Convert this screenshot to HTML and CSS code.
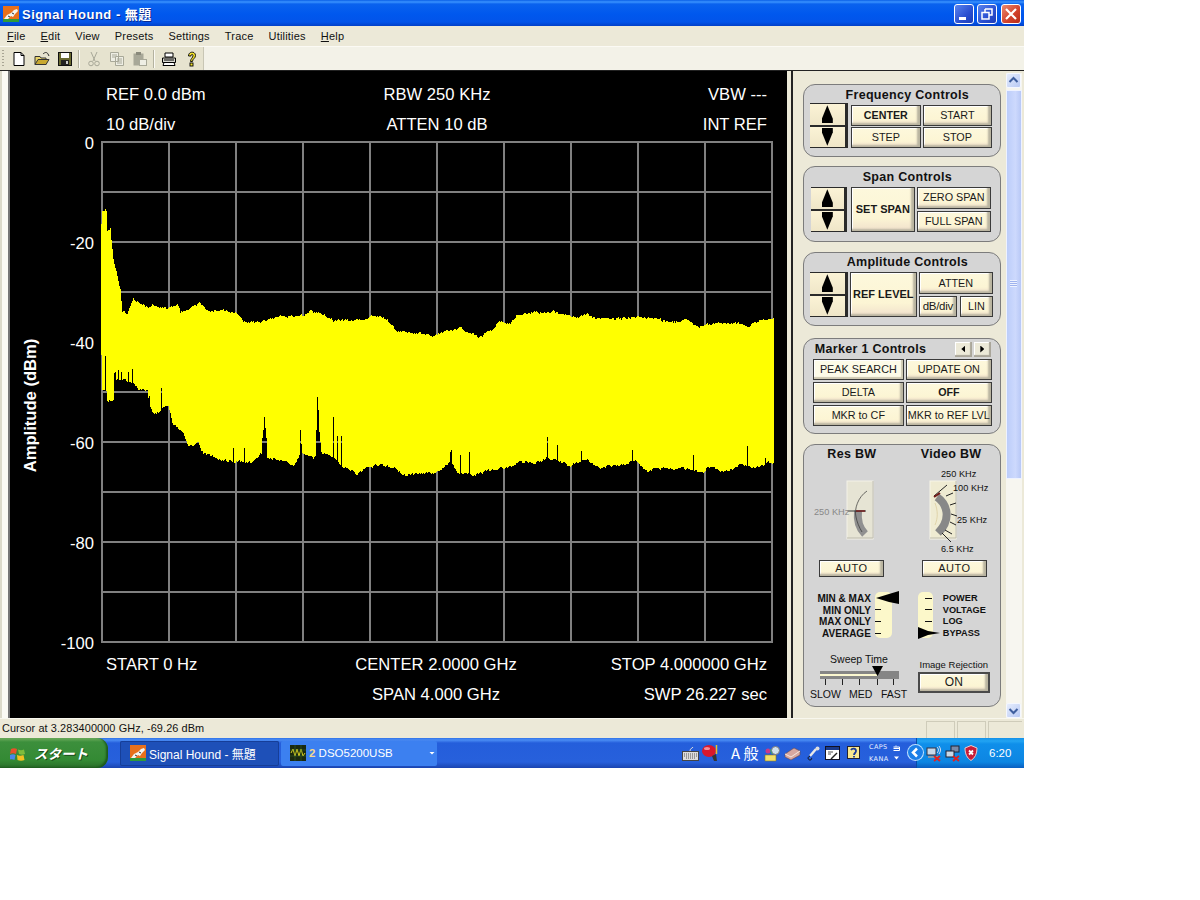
FILE: index.html
```html
<!DOCTYPE html>
<html lang="ja">
<head>
<meta charset="utf-8">
<title>Signal Hound - 無題</title>
<link rel="stylesheet" href="styles.css">
</head>
<body>
<svg class="defs" width="0" height="0">
  <symbol id="hound" viewBox="0 0 16 16">
    <rect width="16" height="16" fill="#e8701c"/>
    <rect y="13" width="16" height="3" fill="#2f9a3a"/>
    <path d="M1 13l3-4 4-2 3-3 3-1 1 2-3 3-2 3-2-1-3 3z" fill="#f4f4f0"/>
    <path d="M5 10l2 1 M9 7l2 1" stroke="#333" fill="none"/>
  </symbol>
</svg>
<div class="app">
  <header class="titlebar">
    <svg class="title-icon" width="16" height="16"><use href="#hound"/></svg>
    <span class="title-text">Signal Hound - 無題</span>
    <div class="win-btns">
      <span class="win-btn"><svg width="20" height="20" viewBox="0 0 20 20"><rect x="5" y="13" width="7" height="3" fill="#fff"/></svg></span>
      <span class="win-btn"><svg width="20" height="20" viewBox="0 0 20 20"><path d="M8 5h7v6h-3M8 5v3M5 8.500h7v6.500H5z" fill="none" stroke="#fff" stroke-width="1.500"/></svg></span>
      <span class="win-btn win-close"><svg width="20" height="20" viewBox="0 0 20 20"><path d="M5 5l10 10M15 5L5 15" stroke="#fff" stroke-width="2.200"/></svg></span>
    </div>
  </header>
  <nav class="menubar">
    <span><u>F</u>ile</span><span><u>E</u>dit</span><span>View</span><span>Presets</span><span>Settings</span><span>Trace</span><span>Utilities</span><span><u>H</u>elp</span>
  </nav>
  <div class="toolbar">
    <div class="tools">
      <i class="gripper"></i>
      <span class="tool"><svg width="16" height="16" viewBox="0 0 16 16"><path d="M3 1.500h7l3 3v10H3z" fill="#fff" stroke="#000"/><path d="M10 1.500v3h3" fill="none" stroke="#000"/></svg></span>
      <span class="tool"><svg width="16" height="16" viewBox="0 0 16 16"><path d="M1 5.500h5l1 1.500h5v6.500H1z" fill="#e8d46a" stroke="#333"/><path d="M1 13.500l3-5h11l-3 5z" fill="#c8a830" stroke="#333"/><path d="M9 3c2-2 4-2 5 0l1 2" stroke="#2a2a2a" fill="none"/></svg></span>
      <span class="tool"><svg width="16" height="16" viewBox="0 0 16 16"><rect x="1.500" y="1.500" width="13" height="13" fill="#6a6a30" stroke="#111"/><rect x="4" y="2" width="8" height="5" fill="#fff"/><rect x="4" y="9" width="8" height="5" fill="#222"/><rect x="9" y="10" width="2" height="3" fill="#ccc"/></svg></span>
      <i class="tool-sep"></i>
      <span class="tool"><svg width="16" height="16" viewBox="0 0 16 16"><path d="M5 1l4 9M11 1L7 10" stroke="#a8a898" fill="none"/><circle cx="5" cy="12.500" r="2.300" fill="none" stroke="#a8a898"/><circle cx="11" cy="12.500" r="2.300" fill="none" stroke="#a8a898"/></svg></span>
      <span class="tool"><svg width="16" height="16" viewBox="0 0 16 16"><path d="M1.500 1.500h8v9h-8zM6.500 5.500h8v9h-8z" fill="#eeeee4" stroke="#a8a898"/><path d="M3 4h5M3 6h3M8 8h5M8 10h5M8 12h5" stroke="#a8a898"/></svg></span>
      <span class="tool"><svg width="16" height="16" viewBox="0 0 16 16"><rect x="1.500" y="2.500" width="10" height="12" fill="#a8a898"/><rect x="4" y="1" width="5" height="3" fill="#8a8a7c"/><rect x="7.500" y="8.500" width="7" height="6" fill="#eeeee4" stroke="#a8a898"/></svg></span>
      <i class="tool-sep"></i>
      <span class="tool"><svg width="16" height="16" viewBox="0 0 16 16"><path d="M4 2h8v4H4z" fill="#fff" stroke="#000"/><path d="M1.500 7h13v4.500h-13z" fill="#d8d8d0" stroke="#000"/><path d="M3 11.500h10l1 3H2z" fill="#fff" stroke="#000"/><path d="M3 9h10" stroke="#000"/></svg></span>
      <span class="tool"><svg width="16" height="16" viewBox="0 0 16 16"><path d="M4.500 5c0-5 7-5 7-.500 0 3-3 3-3 6H6.500c0-3 2.500-3.500 2.500-6 0-1.500-2-1.500-2 .500z" fill="#f2e22c" stroke="#000" stroke-width=".9"/><rect x="6" y="12" width="3" height="3" fill="#f2e22c" stroke="#000" stroke-width=".9"/></svg></span>
    </div>
    <div class="toolbar-rest"></div>
  </div>
  <main class="workspace">
    <div class="plot-edge"></div>
    <svg class="plot" id="plot" viewBox="10 71 777 647" width="777" height="647">
      <g id="grid" class="grid"></g>
      <path id="trace" class="trace"/>
      <g class="plot-text">
        <text x="106" y="100">REF 0.0 dBm</text>
        <text x="106" y="130">10 dB/div</text>
        <text x="437" y="100" class="mid">RBW 250 KHz</text>
        <text x="437" y="130" class="mid">ATTEN 10 dB</text>
        <text x="767" y="100" class="end">VBW ---</text>
        <text x="767" y="130" class="end">INT REF</text>
        <text x="94" y="149" class="end">0</text>
        <text x="94" y="249" class="end">-20</text>
        <text x="94" y="349" class="end">-40</text>
        <text x="94" y="449" class="end">-60</text>
        <text x="94" y="549" class="end">-80</text>
        <text x="94" y="649" class="end">-100</text>
        <text x="106" y="670">START 0 Hz</text>
        <text x="436" y="670" class="mid">CENTER 2.0000 GHz</text>
        <text x="767" y="670" class="end">STOP 4.000000 GHz</text>
        <text x="436" y="700" class="mid">SPAN 4.000 GHz</text>
        <text x="767" y="700" class="end">SWP 26.227 sec</text>
        <text transform="translate(35.500 405.500) rotate(-90)" class="mid axis">Amplitude (dBm)</text>
      </g>
    </svg>
    <aside class="side">
      <div class="controls">
        <section class="group g-freq">
          <h3>Frequency Controls</h3>
          <div class="g-body">
            <div class="updown w38"><b class="ub"><i class="tri-up"></i></b><b class="ub"><i class="tri-down"></i></b></div>
            <div class="btn-grid freq-grid">
              <button class="btn strong">CENTER</button><button class="btn">START</button>
              <button class="btn">STEP</button><button class="btn">STOP</button>
            </div>
          </div>
        </section>
        <section class="group g-span">
          <h3>Span Controls</h3>
          <div class="g-body">
            <div class="updown w36"><b class="ub"><i class="tri-up"></i></b><b class="ub"><i class="tri-down"></i></b></div>
            <button class="btn big span-main">SET SPAN</button>
            <div class="stack span-stack"><button class="btn">ZERO SPAN</button><button class="btn">FULL SPAN</button></div>
          </div>
        </section>
        <section class="group g-amp">
          <h3>Amplitude Controls</h3>
          <div class="g-body">
            <div class="updown w38"><b class="ub"><i class="tri-up"></i></b><b class="ub"><i class="tri-down"></i></b></div>
            <button class="btn big amp-main">REF LEVEL</button>
            <div class="amp-grid">
              <button class="btn amp-wide">ATTEN</button>
              <button class="btn tight">dB/div</button><button class="btn">LIN</button>
            </div>
          </div>
        </section>
        <section class="group g-marker">
          <div class="marker-head">
            <h3>Marker 1 Controls</h3>
            <span class="nudge"><i class="nudge-l"></i></span><span class="nudge"><i class="nudge-r"></i></span>
          </div>
          <div class="btn-grid marker-grid">
            <button class="btn light">PEAK SEARCH</button><button class="btn">UPDATE ON</button>
            <button class="btn">DELTA</button><button class="btn strong">OFF</button>
            <button class="btn">MKR to CF</button><button class="btn">MKR to REF LVL</button>
          </div>
        </section>
        <section class="group g-bw">
          <div class="bw-head"><h3>Res BW</h3><h3>Video BW</h3></div>
          <div class="dials">
            <svg width="97" height="89" viewBox="803 465 97 89">
              <rect x="846" y="481" width="26" height="58" fill="#e6e4d4" stroke="#f4f2e8"/>
              <path d="M846 538h26v-57" fill="none" stroke="#bdbbae"/>
              <path d="M864 534c-6-6-8-14-7-23" fill="none" stroke="#909090" stroke-width="8"/>
              <path d="M866 491c-9 6-13 18-11 26 1 5 3 10 6 15" fill="none" stroke="#333" stroke-width=".7"/>
              <path d="M847 511h18" stroke="#333"/><path d="M855 511h9" stroke="#701818" stroke-width="1.500"/>
              <text x="813" y="514.500" class="dial-t off">250 KHz</text>
            </svg>
            <svg width="101" height="89" viewBox="900 465 101 89">
              <rect x="929" y="481" width="26" height="58" fill="#efebd2" stroke="#f8f6e8"/>
              <path d="M929 538h26v-57" fill="none" stroke="#bdbbae"/>
              <path d="M936 497c10 7 15 22 1 36" fill="none" stroke="#888" stroke-width="8"/>
              <path d="M933 496l13-11M945 496l7-3M949 505l6-2M950 514l6 2M949 522l6 3M944 530l7 4M941 533l9 9" stroke="#222" fill="none"/>
              <path d="M933 497l6-4" stroke="#701818" stroke-width="2"/>
              <path d="M934 503c3 8 3 15 0 22" fill="none" stroke="#d8c898" stroke-width=".7"/>
              <text x="940" y="477" class="dial-t">250 KHz</text>
              <text x="952" y="491" class="dial-t">100 KHz</text>
              <text x="956" y="523" class="dial-t">25 KHz</text>
              <text x="940" y="552" class="dial-t">6.5 KHz</text>
            </svg>
          </div>
          <div class="auto-row"><button class="btn auto">AUTO</button><button class="btn auto">AUTO</button></div>
          <div class="selectors">
            <div class="sel-left">
              <div class="sel-labels right"><span>MIN &amp; MAX</span><span>MIN ONLY</span><span>MAX ONLY</span><span>AVERAGE</span></div>
              <svg width="25" height="50" viewBox="875 590 25 50">
                <rect x="875" y="592" width="17" height="46" rx="5" fill="#fcf8ca"/>
                <path d="M875 609.500h6M875 621.500h6M875 633.500h6" stroke="#111"/>
                <path d="M876 598l13-4 10-3v13l-10-2z" fill="#000"/>
              </svg>
            </div>
            <div class="sel-right">
              <svg width="24" height="50" viewBox="917 590 24 50">
                <rect x="918" y="592" width="15" height="46" rx="5" fill="#fcf8ca"/>
                <path d="M925 598.500h7M925 609.500h7M925 621.500h7" stroke="#111"/>
                <path d="M918 627l10 4 12 2-12 2-10 4z" fill="#000"/>
              </svg>
              <div class="sel-labels narrow"><span>POWER</span><span>VOLTAGE</span><span>LOG</span><span>BYPASS</span></div>
            </div>
          </div>
          <div class="bottom-row">
            <svg class="sweep" width="100" height="50" viewBox="808 652 100 50">
              <text x="859" y="664" class="sweep-t mid">Sweep Time</text>
              <rect x="820" y="672" width="79" height="8" fill="#858585"/>
              <rect x="820" y="675" width="57" height="2" fill="#fbf7cf"/>
              <path d="M872 667h11l-5.500 10z" fill="#000"/>
              <path d="M825.500 680v6M842.500 680v6M859.500 680v6M877.500 680v6M893.500 680v6" stroke="#222"/>
              <text x="810" y="699" class="sweep-t">SLOW</text>
              <text x="849" y="699" class="sweep-t">MED</text>
              <text x="881" y="699" class="sweep-t">FAST</text>
            </svg>
            <div class="rejection">
              <span class="rej-label">Image Rejection</span>
              <button class="btn on">ON</button>
            </div>
          </div>
        </section>
      </div>
      <div class="scrollbar">
        <span class="sb-arrow"><svg width="15" height="15" viewBox="0 0 15 15"><path d="M3.500 9l4-4 4 4" fill="none" stroke="#3f5f9f" stroke-width="2"/></svg></span>
        <span class="sb-thumb"><i></i></span>
        <span class="sb-track"></span>
        <span class="sb-arrow"><svg width="15" height="15" viewBox="0 0 15 15"><path d="M3.500 6l4 4 4-4" fill="none" stroke="#3f5f9f" stroke-width="2"/></svg></span>
      </div>
    </aside>
  </main>
  <footer class="statusbar">
    <span class="status-text">Cursor at 3.283400000 GHz, -69.26 dBm</span>
    <span class="pane"></span><span class="pane"></span><span class="pane last"></span>
  </footer>
  <div class="taskbar">
    <div class="start">
      <svg width="17" height="17" viewBox="0 0 17 17"><path d="M1 4c2-1 4-1 6 0l-1 5c-2-1-4-1-6 0z" fill="#e8512a"/><path d="M8 4.500c2 1 4 1 6 0l1 4.500c-2 1-4 1-6 0z" fill="#7fbc3c"/><path d="M0 10c2-1 4-1 5.500 0l-1 5c-2-1-3.500-1-5.500 0z" fill="#4a86e8"/><path d="M7 10c2 1 4 1 6.500 0l1 5c-2 1-5 1-7 0z" fill="#f4c021"/></svg>
      <span class="start-t">スタート</span>
    </div>
    <div class="task active">
      <svg width="16" height="16"><use href="#hound"/></svg>
      <span>Signal Hound - 無題</span>
    </div>
    <div class="task group-task">
      <svg width="16" height="16" viewBox="0 0 16 16"><rect width="16" height="16" fill="#1a2a10"/><path d="M1 8l2-4 2 7 2-7 2 7 2-7 2 7 2-3" stroke="#d8d020" fill="none"/><path d="M0 5h16M0 11h16M5 0v16M11 0v16" stroke="#3a6a30" stroke-width=".5"/></svg>
      <span><b>2</b> DSO5200USB</span>
      <i class="caret"></i>
    </div>
    <div class="quick">
      <svg width="17" height="15" viewBox="0 0 17 15"><rect x=".5" y="5.500" width="16" height="9" fill="#ddd" stroke="#444"/><path d="M2 8h13M2 10h13M4 12h9" stroke="#555" stroke-dasharray="1 1"/><path d="M8 5c0-3 2-2 3-4" stroke="#ddd" fill="none"/></svg>
      <svg class="q-ball" width="17" height="17" viewBox="0 0 17 17"><ellipse cx="7" cy="7" rx="7" ry="6" fill="#d8182c"/><ellipse cx="5" cy="4.500" rx="3" ry="1.500" fill="#f48c98"/><path d="M10 12l2 5h3l-1-7z" fill="#333"/><path d="M14.500 1v9" stroke="#e8c030" stroke-width="1.500"/></svg>
      <span class="ime">A 般</span>
      <svg width="17" height="17" viewBox="0 0 17 17"><path d="M1 10h11v6H1z" fill="#f2e06a" stroke="#8a7a20" stroke-width=".6"/><circle cx="11.500" cy="5.500" r="4" fill="#cfe0ee" stroke="#777"/><circle cx="4" cy="6" r="2.500" fill="#c83a8a"/><path d="M6 4l2 5" stroke="#3a7"/></svg>
      <svg width="17" height="15" viewBox="0 0 17 15"><path d="M1 8l9-6 6 3v4l-9 5-6-3z" fill="#d9a8a0" stroke="#6a4a4a" stroke-width=".6"/><path d="M1 8l6 3 9-6" stroke="#f4e8e0" fill="none"/></svg>
      <svg class="q-mic" width="13" height="15" viewBox="0 0 13 15"><path d="M3 10L9 3" stroke="#e8e8e8" stroke-width="2.500"/><circle cx="10.500" cy="2.500" r="2" fill="#ddd"/><path d="M3 10c-3 1-2 4 0 4s2-2 1-2" fill="none" stroke="#111"/></svg>
      <svg class="q-win" width="15" height="15" viewBox="0 0 15 15"><rect x=".5" y=".5" width="14" height="13" fill="#fff" stroke="#112"/><rect x="1" y="1" width="13" height="3" fill="#1a3a8a"/><path d="M3 6h5M3 8h3" stroke="#555"/><path d="M6 13l6-6" stroke="#222" stroke-width="1.500"/></svg>
      <svg class="q-help" width="13" height="15" viewBox="0 0 13 15"><rect x=".5" y=".5" width="12" height="12" fill="#f8e890" stroke="#223"/><path d="M4 4c1-2 5-2 5 1 0 2-2 2-2 4M7 10v1.500" fill="none" stroke="#1a3a9a" stroke-width="1.800"/></svg>
      <div class="caps"><span>CAPS</span><span>KANA</span></div>
      <div class="caps-side"><svg width="7" height="17" viewBox="0 0 7 17"><path d="M3 .500v1M.5 2h6v3.500h-6M.5 3.500h6" fill="none" stroke="#fff"/><path d="M1 11.500h5l-2.500 3z" fill="#fff"/></svg></div>
    </div>
    <div class="tray">
      <span class="chev"><svg width="15" height="15" viewBox="0 0 15 15"><path d="M9 3.500L5 7.500l4 4" fill="none" stroke="#fff" stroke-width="2.500"/></svg></span>
      <svg class="t-net" width="16" height="17" viewBox="0 0 16 17"><rect x="1" y="3" width="9" height="7" fill="#c8d8e8" stroke="#334"/><rect x="2" y="11" width="10" height="2" fill="#8898a8"/><path d="M11 2c2 2 2 4 0 6M13 1c2 3 2 5 0 8" stroke="#dde" fill="none"/><path d="M8 11l6 5M14 11l-6 5" stroke="#e02020" stroke-width="1.800"/></svg>
      <svg class="t-net2" width="16" height="17" viewBox="0 0 16 17"><rect x="6" y="1" width="8" height="6" fill="#7a8aa8" stroke="#223"/><rect x="1" y="6" width="8" height="6" fill="#c8d8e8" stroke="#223"/><path d="M8 11l6 5M14 11l-6 5" stroke="#e02020" stroke-width="1.800"/></svg>
      <svg class="t-shield" width="14" height="16" viewBox="0 0 14 16"><path d="M7 .500l6 2.500c0 6-2 10-6 12.500C3 13 1 9 1 3z" fill="#c81c38" stroke="#ecc"/><path d="M5 5.500l4 4M9 5.500l-4 4" stroke="#fff" stroke-width="1.800"/></svg>
      <span class="clock">6:20</span>
    </div>
  </div>
</div>
<script src="app.js"></script>
</body>
</html>
```

FILE: styles.css
```css
* { box-sizing: border-box; }
html, body { margin: 0; padding: 0; background: #fff; }
body { font-family: "Liberation Sans", "Noto Sans CJK JP", sans-serif; }
.defs { position: absolute; }
.app { width: 1024px; height: 768px; display: flex; flex-direction: column; overflow: hidden; background: #ece9d8; }

.titlebar { height: 26px; display: flex; align-items: center; padding: 1px 3px 0 3px; background: linear-gradient(#0a5fe6 0, #3a93ff 2px, #0a62ee 4px, #0058ee 14px, #0254ea 22px, #0240c8 26px); }
.title-icon { flex: none; margin-right: 3px; }
.title-text { color: #fff; font-weight: bold; font-size: 13px; letter-spacing: .5px; text-shadow: 1px 1px #0a2a90; white-space: nowrap; }
.win-btns { margin-left: auto; display: flex; gap: 3px; }
.win-btn { width: 20px; height: 20px; border: 1px solid #fff; border-radius: 3px; background: linear-gradient(135deg, #5a84ee, #2a4fd0 60%, #1c3cb8); display: flex; align-items: center; justify-content: center; }
.win-btn svg { flex: none; }
.win-close { background: linear-gradient(135deg, #ec8a70, #d0402a 60%, #b82c18); margin-left: 1px; }

.menubar { height: 21px; display: flex; align-items: center; gap: 15px; padding: 0 0 0 7px; font-size: 11px; letter-spacing: .2px; color: #111; background: #ece9d8; border-bottom: 1px solid #fbfaf4; }

.toolbar { height: 23px; display: flex; background: #ece9d8; }
.tools { width: 204px; display: flex; align-items: center; padding-left: 2px; border-right: 1px solid #c8c6b4; background: #e6e3cf; }
.gripper { width: 2px; height: 17px; margin-right: 3px; background: repeating-linear-gradient(#a8a594 0 1px, transparent 1px 3px); }
.tool { width: 23px; height: 23px; display: flex; align-items: center; justify-content: center; }
.tool-sep { width: 1px; height: 18px; margin: 0 3px 0 2px; background: #b4b2a0; box-shadow: 1px 0 #fbfaf4; }
.toolbar-rest { flex: 1; background: #f3f2e8; }

.workspace { height: 648px; display: flex; background: #ece9d8; border-top: 1px solid #222; }
.plot-edge { width: 10px; background: linear-gradient(90deg, #dcdaca 0 2px, #fbfaf4 2px 8px, #777 8px 10px); }
.plot { display: block; width: 777px; height: 647px; background: #000; flex: none; }
.grid line { stroke: #808080; stroke-width: 2; }
.trace { fill: #ffff00; shape-rendering: crispEdges; }
.plot-text text { fill: #fff; font-size: 16.6px; font-family: "Liberation Sans", sans-serif; }
.plot-text .mid, .sweep-t.mid { text-anchor: middle; }
.plot-text .end { text-anchor: end; }
.plot-text .axis { font-weight: bold; font-size: 16.6px; }

.side { width: 237px; margin-left: 4px; display: flex; border-left: 2px solid #222; padding-right: 2px; }
.controls { width: 213px; padding: 13px 0 0 10px; display: flex; flex-direction: column; gap: 9px; flex: none; }
.group { width: 198px; background: #d5d5d5; border: 1px solid #7c7c7c; border-radius: 12px; }
.group h3 { margin: 0; font-size: 12.500px; font-weight: bold; color: #111; letter-spacing: .3px; text-align: center; line-height: 14px; white-space: nowrap; }
.g-freq, .g-span, .g-amp { padding-left: 0; }
.g-freq h3, .g-span h3, .g-amp h3 { padding-left: 11px; }
.g-freq { height: 73px; padding-top: 3px; }
.g-span { height: 76px; padding-top: 3px; }
.g-amp { height: 74px; padding-top: 2px; margin-top: 1px; }
.g-marker { height: 96px; padding-top: 2px; margin-top: 3px; }
.g-bw { height: 263px; margin-top: 1px; padding-top: 2px; }

.g-body { display: flex; }
.g-freq .g-body { padding: 2px 0 0 6px; gap: 3px; }
.g-freq .updown { margin-top: -1px; }
.g-span .g-body { padding: 3px 0 0 7px; gap: 4px; }
.g-amp .g-body { padding: 3px 0 0 6px; gap: 2px; }

.updown { display: flex; flex-direction: column; height: 45px; background: #2a2a2a; padding: 1px 3px 1px 0; gap: 2px; }
.w38 { width: 38px; }
.w36 { width: 36px; }
.ub { flex: 1; display: flex; justify-content: center; align-items: center; background: linear-gradient(#fbf3d6, #efe6c8); }
.tri-up, .tri-down { display: block; width: 11px; height: 18px; background: #000; }
.tri-up { clip-path: polygon(50% 0, 100% 75%, 100% 100%, 0 100%, 0 75%); }
.tri-down { clip-path: polygon(0 0, 100% 0, 100% 25%, 50% 100%, 0 25%); }

.btn { display: flex; align-items: center; justify-content: center; margin: 0; padding: 0 0 1px; font-family: "Liberation Sans", sans-serif; font-size: 10.800px; color: #1a1a1a; border: 1px solid #3a3a3a; border-radius: 0; background: linear-gradient(#fdf8dc, #fcf5d4 70%, #f0e0cc); box-shadow: inset -3px -2px 2px #b9b4a0, inset 1px 1px #fff; white-space: nowrap; }
.btn.strong, .btn.big { font-weight: bold; }
.btn.strong { font-size: 10.700px; }
.btn.big { font-size: 11px; }
.btn.tight { font-size: 11.500px; letter-spacing: -.3px; }
.btn.light { background: #fdfbe8; box-shadow: inset -2px -2px 1px #cfc9b2, inset 1px 1px #fff; }

.btn-grid { display: grid; }
.freq-grid { grid-template-columns: 70px 69px; grid-template-rows: 21px 21px; gap: 1px 2px; margin-top: 1px; }
.span-main { width: 64px; height: 45px; }
.stack { display: flex; flex-direction: column; gap: 2px; }
.span-stack { width: 74px; margin-left: -2px; }
.span-stack .btn { height: 21.500px; }
.amp-main { width: 67px; height: 45px; }
.amp-grid { display: grid; grid-template-columns: 38px 33px; grid-template-rows: 22px 21px; gap: 2px 3px; margin-left: 0; width: 74px; }
.amp-wide { grid-column: 1 / 3; }

.marker-head { display: flex; align-items: center; padding-left: 11px; height: 16px; }
.marker-head h3 { width: 140px; text-align: left; }
.nudge { width: 17px; height: 15px; margin-right: 2px; display: flex; align-items: center; justify-content: center; background: #ece9d8; box-shadow: inset -2px -2px 1px #aaa69a, inset 1px 1px #fff; }
.nudge-l, .nudge-r { display: block; width: 4px; height: 7px; background: #000; }
.nudge-l { clip-path: polygon(100% 0, 100% 100%, 0 50%); }
.nudge-r { clip-path: polygon(0 0, 100% 50%, 0 100%); }
.marker-grid { grid-template-columns: 91px 86px; grid-template-rows: 21px 21px 21px; gap: 2px 2px; padding: 2px 0 0 9px; }

.bw-head { display: flex; padding: 0 0 0 23px; gap: 44px; }
.bw-head h3:first-child { width: 50px; }
.dials { display: flex; margin-top: 4px; height: 89px; }
.dials svg { display: block; flex: none; }
.dial-t { font-size: 9.200px; fill: #111; }
.dial-t.off { fill: #888; }
.auto-row { display: flex; padding: 6px 0 0 15px; gap: 38px; }
.auto { width: 65px; height: 17px; font-size: 11px; letter-spacing: .5px; }

.selectors { display: flex; margin-top: 13px; height: 50px; }
.sel-left { width: 96px; display: flex; justify-content: flex-end; }
.sel-left svg { margin-left: 4px; flex: none; }
.sel-right { display: flex; margin-left: 17px; }
.sel-right svg { flex: none; margin-right: 2px; }
.sel-labels { display: flex; flex-direction: column; padding-top: 3px; font-size: 10px; font-weight: bold; line-height: 11.700px; color: #111; white-space: nowrap; }
.sel-labels.right { text-align: right; }
.sel-labels.narrow { font-size: 9.200px; }

.bottom-row { display: flex; margin-top: 11px; }
.sweep { flex: none; margin-left: 4px; display: block; }
.sweep-t { font-size: 10.500px; fill: #111; }
.rejection { margin-left: 9px; width: 74px; display: flex; flex-direction: column; align-items: center; padding-top: 8px; }
.rej-label { font-size: 9.500px; color: #111; white-space: nowrap; line-height: 12px; }
.on { margin-top: 1px; width: 72px; height: 21px; border: 2px solid #4a4a4a; font-size: 12px; }

.scrollbar { width: 16px; margin-top: 2px; display: flex; flex-direction: column; background: #f6f5ee; }
.sb-arrow { height: 15px; width: 15px; flex: none; background: linear-gradient(135deg, #e6edfd, #b8c9f4); border: 1px solid #f4f7ff; border-radius: 2px; display: block; }
.sb-arrow svg { display: block; margin: -1px; }
.sb-thumb { height: 389px; flex: none; margin-top: 2px; background: linear-gradient(90deg, #bccdfa, #cdd9fd 60%, #b8c8f6); border: 1px solid #eef2ff; display: flex; align-items: flex-end; justify-content: center; }
.sb-thumb i { display: block; width: 7px; height: 7px; margin-bottom: 191px; background: repeating-linear-gradient(#eef2ff 0 1px, #9fb3ee 1px 2px); }
.sb-track { flex: 1; background: #f7f6f0; }

.statusbar { height: 20px; display: flex; align-items: center; padding: 0 2px 0 2px; background: #ece9d8; border-top: 1px solid #f8f7ee; }
.status-text { font-size: 10.900px; letter-spacing: .1px; color: #111; margin-right: auto; padding-bottom: 1px; white-space: nowrap; }
.pane { width: 29px; height: 17px; margin-top: 2px; margin-left: 2px; border: 1px solid #cfccba; border-bottom: none; }
.pane.last { width: 34px; border-right: none; }

.taskbar { height: 30px; display: flex; align-items: center; background: linear-gradient(#2f72e8 0, #4a8cf4 2px, #245edb 5px, #2760dc 24px, #1a44b0 30px); }
.start { width: 108px; height: 30px; display: flex; align-items: center; gap: 7px; padding-left: 10px; border-radius: 0 11px 11px 0; background: linear-gradient(#6fae5e 0, #3c8f3c 4px, #348a34 22px, #2a6e2a 30px); box-shadow: inset -2px -1px 2px #1c5a1c; flex: none; }
.start svg { flex: none; }
.start-t { color: #fff; font-style: italic; font-weight: bold; font-size: 13.500px; text-shadow: 1px 1px #1c4c1c; font-family: "Noto Sans CJK JP", sans-serif; white-space: nowrap; }
.task { height: 25px; display: flex; align-items: center; gap: 2px; color: #fff; font-size: 12px; border-radius: 2px; white-space: nowrap; flex: none; }
.task.active { width: 159px; margin-left: 12px; padding-left: 10px; gap: 3px; background: #1e50b8; box-shadow: inset 0 0 0 1px #163e98; }
.group-task { width: 156px; margin-left: 2px; padding-left: 9px; gap: 3px; font-size: 11.500px; background: #3c80f0; position: relative; }
.group-task b { color: #f4d890; }
.caret { position: absolute; right: 2px; top: 11px; width: 6px; height: 3px; background: #fff; clip-path: polygon(0 0, 100% 0, 50% 100%); }
.quick { flex: 1; display: flex; align-items: center; padding-left: 245px; }
.quick svg { flex: none; }
.q-ball { margin-left: 3px; margin-top: -2px; }
.ime { width: 45px; padding-left: 12px; color: #fff; font-size: 15px; font-family: "Noto Sans CJK JP", sans-serif; white-space: nowrap; line-height: 18px; flex: none; }
.ime + svg { margin-left: 0; margin-right: 3px; }
.q-mic { margin-left: 6px; }
.q-win { margin-left: 5px; }
.q-help { margin-left: 7px; }
.caps { width: 26px; margin-left: 9px; display: flex; flex-direction: column; color: #e8f0ff; font-size: 6.500px; letter-spacing: .4px; line-height: 12px; font-family: "DejaVu Sans", sans-serif; flex: none; }
.caps-side { margin-left: -2px; display: flex; }
.tray { width: 108px; height: 30px; flex: none; display: flex; align-items: center; position: relative; padding-left: 10px; background: linear-gradient(#1490e8 0, #22a4f2 3px, #0f8fea 6px, #0d86e2 24px, #0a5ec0 30px); box-shadow: inset 1px 0 #0a4ca8; }
.chev { position: absolute; left: -8px; top: 7px; width: 15px; height: 15px; border-radius: 50%; background: #1a7fe8; box-shadow: 0 0 0 1px #bfe0ff; display: block; }
.chev svg { display: block; }
.t-net2 { margin-left: 3px; }
.t-shield { margin-left: 3px; }
.clock { margin-left: 11px; color: #fff; font-size: 11.500px; white-space: nowrap; }
```

FILE: app.js
```javascript
(function () {
  var NS = "http://www.w3.org/2000/svg";
  var grid = document.getElementById("grid");
  function line(x1, y1, x2, y2) {
    var l = document.createElementNS(NS, "line");
    l.setAttribute("x1", x1); l.setAttribute("y1", y1);
    l.setAttribute("x2", x2); l.setAttribute("y2", y2);
    grid.appendChild(l);
  }
  var x, i;
  for (i = 0; i <= 10; i++) {
    x = 102 + i * 67;
    line(x, 141, x, 643);
  }
  for (i = 0; i <= 10; i++) {
    var y = 142 + i * 50;
    line(101, y, 773, y);
  }

  var top = [[101,225],[102,212],[106,210],[107,230],[110,228],[113,260],[120,290],[122,312],[127,314],[133,300],[140,302],[147,307],[157,305],[167,309],[177,305],[180,313],[190,307],[200,303],[210,312],[223,309],[237,315],[243,322],[260,322],[280,317],[303,315],[310,311],[323,314],[333,321],[357,320],[377,316],[387,320],[397,332],[413,332],[433,335],[460,328],[477,337],[493,330],[497,322],[510,323],[517,314],[553,312],[573,318],[587,315],[600,320],[640,317],[660,320],[673,323],[683,319],[697,326],[727,323],[750,325],[760,319],[773,318]];
  var bottom = [[101,355],[102,390],[106,390],[107,400],[113,400],[114,374],[116,380],[133,382],[138,390],[147,390],[149,407],[153,413],[158,412],[162,407],[168,408],[172,423],[183,433],[188,447],[198,443],[203,453],[223,460],[250,463],[260,453],[267,457],[287,462],[293,465],[300,453],[313,458],[320,453],[333,457],[343,467],[357,473],[367,468],[380,465],[395,467],[402,475],[433,473],[450,462],[458,473],[473,475],[490,470],[507,468],[520,462],[537,462],[547,458],[560,462],[570,465],[587,460],[600,468],[620,465],[633,460],[647,470],[663,468],[690,470],[703,472],[707,467],[723,472],[743,465],[753,468],[767,462],[773,463]];
  var spikes = { 105:356, 115:372, 118:370, 121:372, 128:372, 132:369, 149:396, 161:388, 233:448, 244:448, 262:438, 263:430, 264:417, 265:428, 266:438, 300:430, 301:444, 316:430, 317:397, 318:410, 319:432, 320:442, 333:417, 337:436, 341:436, 450:452, 451:450, 460:455, 469:452, 547:437, 557:445, 581:451, 632:450, 693:455, 747:446, 765:458 };

  var seed = 20417;
  function rnd() { seed = (seed * 16807) % 2147483647; return seed / 2147483647; }
  function at(pts, px) {
    for (var k = 1; k < pts.length; k++) {
      if (px <= pts[k][0]) {
        var a = pts[k - 1], b = pts[k];
        return a[1] + (b[1] - a[1]) * (px - a[0]) / (b[0] - a[0]);
      }
    }
    return pts[pts.length - 1][1];
  }
  var d = "M101 " + at(top, 101), back = [];
  var jt = 0, jb = 0;
  for (x = 101; x <= 773; x++) {
    jt = jt * 0.6 + (rnd() - 0.5) * 2.6;
    jb = jb * 0.6 + (rnd() - 0.5) * 2.4;
    var t = Math.round(at(top, x) + jt);
    var b = spikes[x] || Math.round(at(bottom, x) + jb);
    d += "L" + x + " " + t + "L" + (x + 1) + " " + t;
    back.push("L" + (x + 1) + " " + b + "L" + x + " " + b);
  }
  d += back.reverse().join("") + "Z";
  document.getElementById("trace").setAttribute("d", d);
})();
```
